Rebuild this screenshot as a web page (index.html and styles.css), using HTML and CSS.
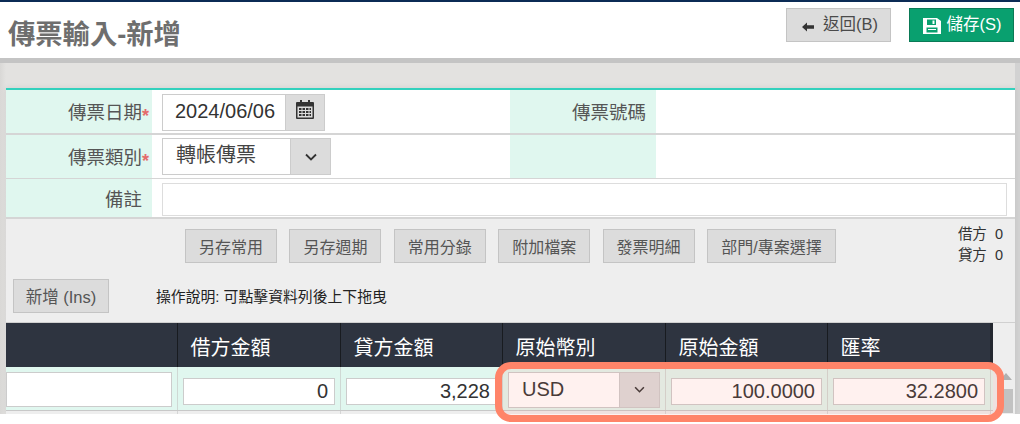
FILE: index.html
```html
<!DOCTYPE html>
<html lang="zh-Hant">
<head>
<meta charset="utf-8">
<title>傳票輸入-新增</title>
<link rel="stylesheet" href="styles.css">
</head>
<body>
<div class="page">
  <header class="topbar">
    <h1 class="title">傳票輸入-新增</h1>
    <div class="top-actions">
      <button class="btn btn-top btn-back" type="button">
        <svg class="ico-back" viewBox="0 0 12 10" width="12" height="10"><path d="M0 5 5 .5V3.200H12V6.800H5V9.500Z" fill="#333"/></svg>返回(B)
      </button>
      <button class="btn btn-top btn-save" type="button">
        <svg class="ico-save" viewBox="0 0 18 18" width="18" height="18"><path fill-rule="evenodd" d="M0 1H14L18 4V17H0ZM4 2.500V8H13V2.500ZM9.500 3.500H11.500V7H9.500ZM3.500 10.500V15.500H14.500V10.500Z" fill="#fff"/><path d="M5 12H13V13H5Z" fill="#fff"/></svg>儲存(S)
      </button>
    </div>
  </header>
  <div class="stage">
    <section class="card">
      <div class="form-row row-a">
        <div class="lbl">傳票日期<span class="req">*</span></div>
        <div class="val val-half">
          <div class="group group-date">
            <span class="field">2024/06/06</span>
            <span class="addon">
              <svg viewBox="0 0 18 19" width="18" height="19"><path fill-rule="evenodd" d="M4 0h2v2h6V0h2v2h3a1 1 0 0 1 1 1v15a1 1 0 0 1-1 1H1a1 1 0 0 1-1-1V3a1 1 0 0 1 1-1h3ZM1.500 6.500V17.500h15V6.500ZM3 8h2.500v2H3Zm3.500 0H9v2H6.500Zm3.500 0h2.500v2H10Zm3.500 0H15v2h-1.500ZM3 11h2.500v2H3Zm3.500 0H9v2H6.500Zm3.500 0h2.500v2H10Zm3.500 0H15v2h-1.500ZM3 14h2.500v2H3Zm3.500 0H9v2H6.500Zm3.500 0h2.500v2H10Zm3.500 0H15v2h-1.500Z" fill="#333"/></svg>
            </span>
          </div>
        </div>
        <div class="lbl">傳票號碼</div>
        <div class="val"></div>
      </div>
      <div class="form-row row-b">
        <div class="lbl">傳票類別<span class="req">*</span></div>
        <div class="val val-half">
          <div class="group group-select">
            <span class="field field-sel">轉帳傳票</span>
            <span class="addon addon-sel">
              <svg viewBox="0 0 12 8" width="12" height="8"><path d="M1 1.500 6 6.500 11 1.500" fill="none" stroke="#333" stroke-width="1.800"/></svg>
            </span>
          </div>
        </div>
        <div class="lbl"></div>
        <div class="val"></div>
      </div>
      <div class="form-row row-c">
        <div class="lbl lbl-note">備註</div>
        <div class="val val-note"><div class="note-input"></div></div>
      </div>

      <div class="toolbar">
        <div class="tool-line">
          <div></div>
          <div class="tool-btns">
            <button class="btn btn-tool" type="button">另存常用</button>
            <button class="btn btn-tool" type="button">另存週期</button>
            <button class="btn btn-tool" type="button">常用分錄</button>
            <button class="btn btn-tool" type="button">附加檔案</button>
            <button class="btn btn-tool" type="button">發票明細</button>
            <button class="btn btn-tool" type="button">部門/專案選擇</button>
          </div>
          <div class="totals">
            <div>借方&nbsp; 0</div>
            <div>貸方&nbsp; 0</div>
          </div>
        </div>
        <div class="add-line">
          <button class="btn btn-add" type="button">新增 (Ins)</button>
          <span class="hint">操作說明: 可點擊資料列後上下拖曳</span>
        </div>
      </div>

      <div class="grid-wrap">
        <div class="grid">
          <div class="grid-head">
            <div class="th"></div>
            <div class="th">借方金額</div>
            <div class="th">貸方金額</div>
            <div class="th">原始幣別</div>
            <div class="th">原始金額</div>
            <div class="th th-last">匯率</div>
          </div>
          <div class="grid-row">
            <div class="td td-first"><div class="box box-tall"></div></div>
            <div class="td"><div class="box box-num">0</div></div>
            <div class="td"><div class="box box-num">3,228</div></div>
            <div class="td td-sel">
              <div class="group group-cur">
                <span class="field field-cur">USD</span>
                <span class="addon addon-cur">
                  <svg viewBox="0 0 12 8" width="11" height="7"><path d="M1 1.500 6 6.500 11 1.500" fill="none" stroke="#333" stroke-width="1.800"/></svg>
                </span>
              </div>
            </div>
            <div class="td"><div class="box box-num">100.0000</div></div>
            <div class="td td-last"><div class="box box-num">32.2800</div></div>
          </div>
          <div class="grid-next">
            <div class="tn"></div><div class="tn"></div><div class="tn"></div><div class="tn"></div><div class="tn"></div><div class="tn"></div>
          </div>
        </div>
        <div class="scroll">
          <span class="scroll-up"></span>
          <span class="scroll-thumb"></span>
        </div>
      </div>
    </section>
  </div>
  <div class="mark"></div>
</div>
</body>
</html>
```
FILE: styles.css
```css
* { box-sizing: border-box; }
html, body { margin: 0; background: #fff; }
body {
  font-family: "Liberation Sans", "Noto Sans CJK TC", sans-serif;
  color: #333;
}
.page { position: relative; height: 424px; overflow: hidden; }

.topbar {
  height: 63px;
  border-top: 2px solid #0b2b55;
  border-bottom: 5px solid #c4c4c4;
  display: flex;
  justify-content: space-between;
  align-items: flex-start;
  background: #fff;
}
.title {
  margin: 15px 0 0 8px;
  font-size: 27.300px;
  line-height: 36px;
  font-weight: bold;
  color: #6e6e6e;
}
.top-actions { display: flex; gap: 18px; margin: 6px 6px 0 0; }

.btn {
  font-family: inherit;
  font-size: 16px;
  color: #555;
  background: #dcdcdc;
  border: 1px solid #c4c4c4;
  padding: 0;
  height: 34px;
  display: inline-flex;
  align-items: center;
  justify-content: center;
}
.btn-top { width: 105px; padding-bottom: 4px; color: #4a4a4a; font-size: 16.500px; }
.btn-back { padding-left: 3px; }
.ico-back { margin: 7px 9px 0 0; }
.btn-save { background: #09a06f; border-color: #0a7a56; color: #fff; }
.ico-save { margin: 6px 6px 0 1px; }

.stage {
  height: 351px;
  background: linear-gradient(to right, #d9d8d6, #e3e2e0 6px, #e3e2e0 1015px, #d2d2d2 1015px);
  padding: 25px 5px 0 6px;
  overflow: hidden;
}
.card {
  height: 326px;
  border-top: 2px solid #33d1bd;
  background: #eee;
  box-shadow: 0 0 6px rgba(0, 0, 0, .08);
  position: relative;
}

.form-row { display: flex; background: #fff; }
.row-a { height: 45px; border-bottom: 2px solid #d5d5d5; }
.row-b { height: 44px; border-bottom: 1px solid #d5d5d5; }
.row-c { height: 40px; border-bottom: 2px solid #d5d5d5; }
.lbl {
  width: 146px;
  flex: none;
  background: #e0f7ef;
  text-align: right;
  padding: 9px 10px 0 0;
  font-size: 18.500px;
  line-height: 28px;
  color: #555;
}
.lbl-note { padding-top: 7px; }
.req {
  color: #e56b6b;
  font-size: 18px;
  font-weight: bold;
  margin-right: -9px;
  display: inline-block;
  width: 9px;
  text-align: left;
  vertical-align: -3px;
  line-height: 20px;
}
.val { flex: 1; }
.val-half { flex: none; width: 358px; padding: 4px 0 0 10px; }
.row-b .val-half { padding-top: 3px; }
.val-note { padding: 4px 8px 0 10px; }
.note-input { height: 33px; background: #fff; border: 1px solid #ddd; }

.group { display: flex; height: 37px; border: 1px solid #ccc; background: #fff; }
.group-date { width: 163px; }
.group-select { width: 169px; }
.field { flex: 1; font-size: 20px; line-height: 33px; color: #333; }
.group-date .field { padding-left: 12px; }
.field-sel { padding-left: 13px; line-height: 33px; color: #444; }
.addon {
  flex: none;
  width: 39px;
  background: #dcdcdc;
  border-left: 1px solid #ccc;
  display: flex;
  align-items: flex-start;
  justify-content: center;
  padding-top: 5px;
}
.addon-sel { padding-top: 14px; width: 40px; }

.toolbar { height: 104px; background: #eee; border-bottom: 1px solid #d0d0d0; padding-top: 10px; }
.tool-line { display: grid; grid-template-columns: 1fr auto 1fr; height: 50px; }
.tool-btns { display: flex; gap: 12.400px; }
.btn-tool { width: 92px; }
.btn-tool:last-child { width: 129px; }
.totals {
  justify-self: end;
  margin: -5px 12px 0 0;
  font-size: 14.500px;
  line-height: 21px;
  color: #333;
  text-align: right;
}
.add-line { display: flex; align-items: center; padding-left: 7px; }
.btn-add { width: 96px; font-size: 16.500px; }
.hint { margin-left: 47px; font-size: 14.850px; color: #222; padding-bottom: 1px; }

.grid-wrap { display: flex; background: #eee; }
.grid { width: 987px; }
.grid-head {
  display: grid;
  grid-template-columns: 172px 163px 162px 163px 162px 162px;
  height: 44px;
  background: #2e3440;
  border-right: 3px solid #23272f;
}
.th {
  border-right: 1px solid #181b20;
  color: #fff;
  font-size: 20px;
  line-height: 50px;
  padding-left: 12.500px;
}
.th-last { border-right: 0; }
.grid-row {
  display: grid;
  grid-template-columns: 172px 163px 162px 163px 162px 163px;
  height: 44px;
  border-bottom: 1px solid #c8c8c8;
  background: #e0f7ef;
}
.td { border-right: 1px solid #cfd8d4; padding: 11px 5px 0 5px; }
.td-first { padding: 5px 5px 0 0; }
.td-sel { padding: 5px 5px 0 5px; }
.box { background: #fff; border: 1px solid #ccc; height: 27px; }
.box-tall { height: 35px; }
.box-num { font-size: 20px; line-height: 25px; text-align: right; padding-right: 6px; color: #333; }
.group-cur { height: 36px; }
.field-cur { padding-left: 13px; line-height: 33px; color: #333; }
.addon-cur { width: 40px; padding-top: 13px; }
.grid-next {
  display: grid;
  grid-template-columns: 172px 163px 162px 163px 162px 163px;
  height: 3px;
}
.tn { border-right: 1px solid #d5d5d5; }

.scroll { width: 15px; margin-left: 5px; display: flex; flex-direction: column; align-items: center; height: 91px; }
.scroll-up {
  margin-top: 50px;
  border: 6px solid transparent;
  border-top: 0;
  border-bottom: 7px solid #b0b0b0;
}
.scroll-thumb { width: 15px; height: 24px; margin-top: 9px; background: #c2c2c2; }

.mark {
  position: absolute;
  left: 495px;
  top: 362px;
  width: 509px;
  height: 60px;
  border: 7px solid #ff8469;
  border-radius: 16px;
  background: rgba(255, 132, 105, .11);
}
```
